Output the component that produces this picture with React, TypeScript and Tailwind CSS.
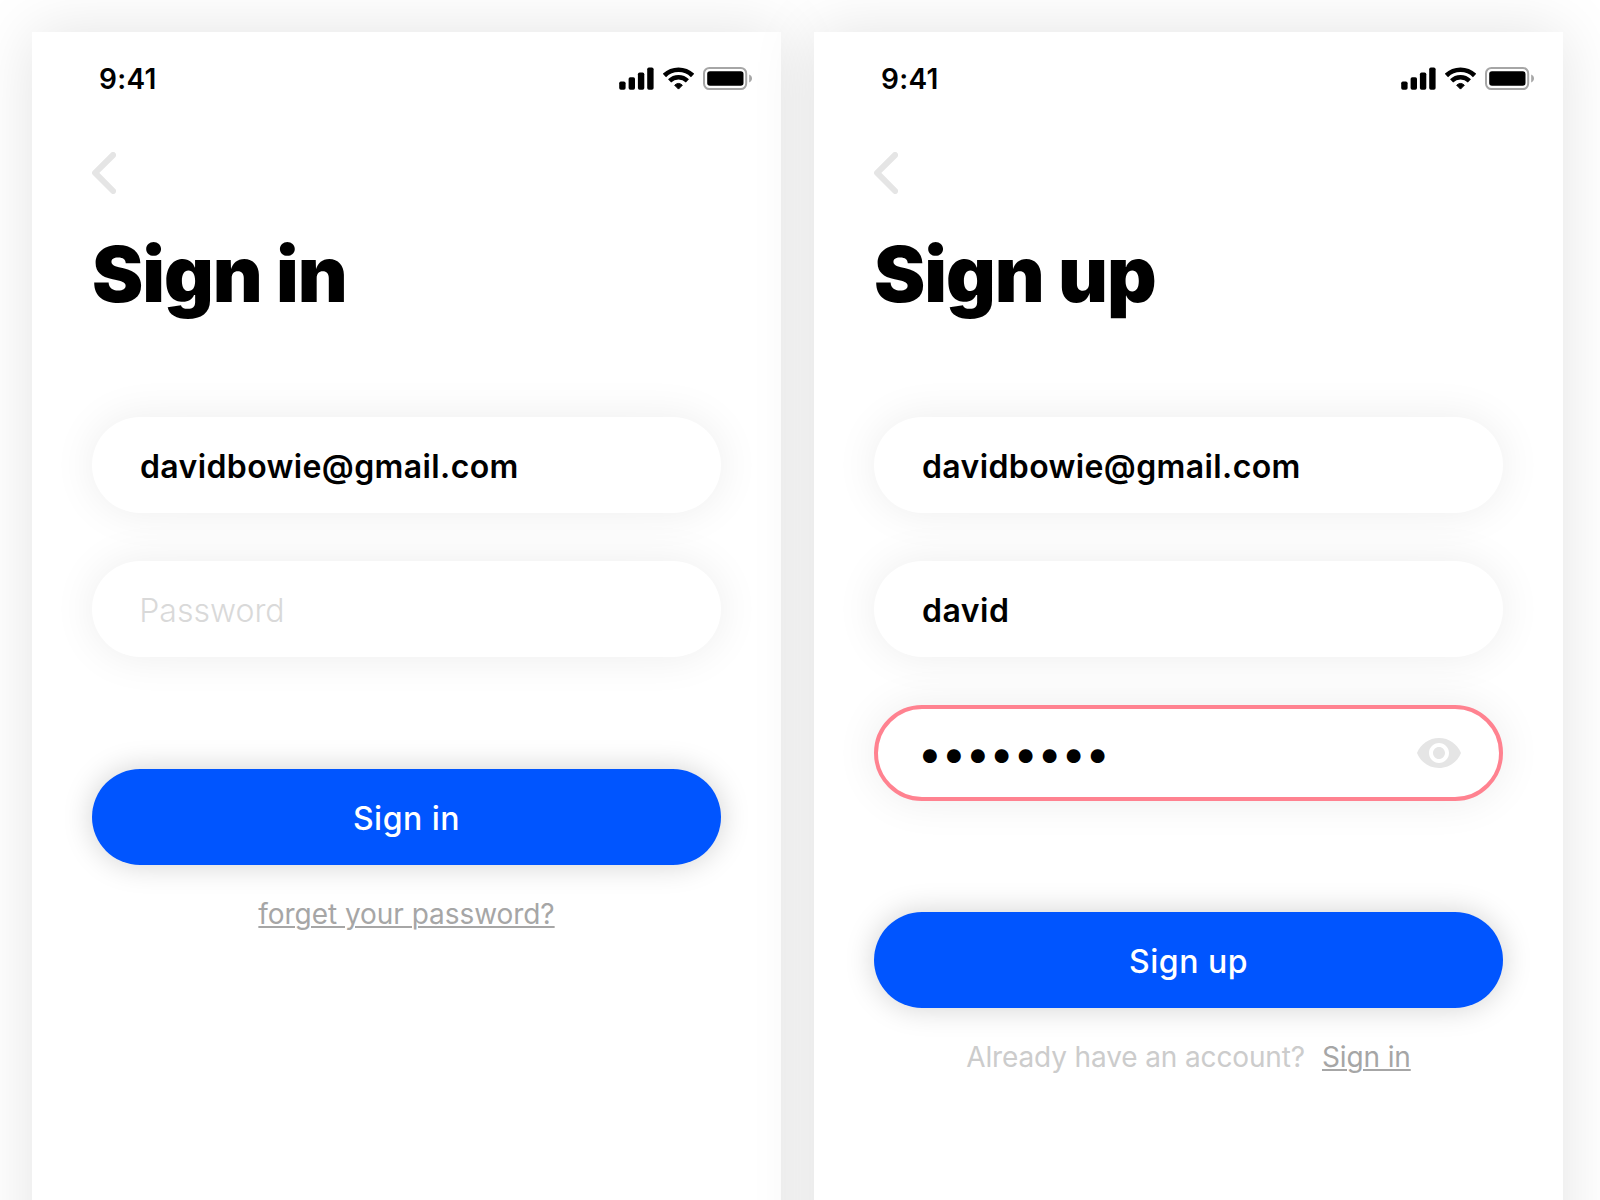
import type { ReactNode } from "react";

function StatusBar() {
  return (
    <div className="flex h-[93px] items-center justify-between pt-px pr-[28px] pl-[67px]">
      <span className="text-[28px] font-[560] tracking-[0.3px]">9:41</span>
      <div className="mb-[2px] flex items-center">
        <svg width="35" height="23" viewBox="0 0 35 23" className="mr-[9px]" aria-hidden="true">
          <rect x="0.2" y="14.5" width="6.4" height="8.3" rx="1.7" />
          <rect x="9.6" y="10.2" width="6.4" height="12.6" rx="1.7" />
          <rect x="18.9" y="5.6" width="6.4" height="17.2" rx="1.7" />
          <rect x="28.2" y="0.6" width="6.4" height="22.2" rx="1.7" />
        </svg>
        <svg width="31" height="23" viewBox="0 0 31 23" className="mr-[9px]" fill="none" stroke="#000" aria-hidden="true">
          <path d="M1.4 8.5 A20.2 20.2 0 0 1 29.6 8.5" strokeWidth="4.7" />
          <path d="M6.6 13.9 A12.6 12.6 0 0 1 24.4 13.9" strokeWidth="4.4" />
          <path d="M11.7 18.2 Q15.5 14.7 19.3 18.2 L15.5 22.1 Z" fill="#000" strokeWidth="1" strokeLinejoin="round" />
        </svg>
        <svg width="50" height="23" viewBox="0 0 50 23" aria-hidden="true">
          <rect x="1" y="1" width="42.2" height="21" rx="5.4" fill="none" stroke="#a6a6a6" strokeWidth="2" />
          <rect x="4.2" y="4.2" width="36.3" height="14.6" rx="2.8" />
          <path d="M46.2 7.6 C48 8.3 49 9.7 49 11.5 C49 13.3 48 14.7 46.2 15.4 Z" fill="#a6a6a6" />
        </svg>
      </div>
    </div>
  );
}

function BackButton() {
  return (
    <button className="mt-[27px] ml-[60px] block h-[42px] w-6" aria-label="Back">
      <svg width="24" height="42" viewBox="0 0 24 42" fill="none" stroke="#e5e5e5" strokeWidth="6" strokeLinecap="round" strokeLinejoin="round">
        <path d="M21.1 3 L3.1 20.9 L21.1 39" />
      </svg>
    </button>
  );
}

function Screen({ title, children }: { title: string; children: ReactNode }) {
  return (
    <section className="h-[1624px] w-[749px] shrink-0 bg-white shadow-[0_0_60px_rgba(0,0,0,0.115)]">
      <StatusBar />
      <BackButton />
      <div className="px-[60px]">
        <h1 className="mt-[32px] text-[77px] leading-[96px] font-[860] tracking-[-1.05px]">{title}</h1>
        <div className="mt-[95px]">{children}</div>
      </div>
    </section>
  );
}

function Field({ children, error = false }: { children: ReactNode; error?: boolean }) {
  return (
    <div
      className={
        "flex h-[96px] items-center justify-between rounded-full bg-white text-[32px] shadow-[0_0_44px_rgba(0,0,0,0.075)] " +
        (error ? "border-4 border-[#ff8290] pr-[36px] pl-[44px]" : "px-[48px] pt-[3px]")
      }
    >
      {children}
    </div>
  );
}

function PrimaryButton({ children }: { children: ReactNode }) {
  return (
    <button className="block h-[96px] w-full rounded-full bg-[#0055ff] pt-[4px] text-center text-[32px] font-medium tracking-[0.5px] text-white shadow-[0_0_30px_rgba(0,0,0,0.18)]">
      {children}
    </button>
  );
}

function EyeIcon() {
  return (
    <svg width="48" height="48" viewBox="0 0 24 24" fill="#e5e5e5" aria-hidden="true">
      <path d="M12 4.5C7 4.5 2.73 7.61 1 12c1.73 4.39 6 7.5 11 7.5s9.27-3.11 11-7.5c-1.73-4.39-6-7.5-11-7.5zM12 17c-2.76 0-5-2.24-5-5s2.24-5 5-5 5 2.24 5 5-2.24 5-5 5zm0-8c-1.66 0-3 1.34-3 3s1.34 3 3 3 3-1.34 3-3-1.34-3-3-3z" />
    </svg>
  );
}

export default function App() {
  return (
    <main className="flex h-[1200px] w-[1600px] gap-[33px] overflow-hidden bg-white pt-8 pl-8 font-['Inter',sans-serif] text-black">
      <Screen title="Sign in">
        <div className="flex flex-col gap-[48px]">
          <Field>
            <span className="font-[640] tracking-[0.38px]">davidbowie@gmail.com</span>
          </Field>
          <Field>
            <span className="-ml-[0.8px] font-[340] text-[#d9d9d9]">Password</span>
          </Field>
        </div>
        <div className="mt-[112px]">
          <PrimaryButton>Sign in</PrimaryButton>
        </div>
        <p className="mt-[29px] text-center text-[28px] leading-[40px] tracking-[-0.05px] text-[#a6a6a6]">
          <a className="underline decoration-2 underline-offset-[2px]">forget your password?</a>
        </p>
      </Screen>
      <Screen title="Sign up">
        <div className="flex flex-col gap-[48px]">
          <Field>
            <span className="font-[640] tracking-[0.38px]">davidbowie@gmail.com</span>
          </Field>
          <Field>
            <span className="font-[640] tracking-[0.5px]">david</span>
          </Field>
          <Field error>
            <span className="-ml-[4.5px] text-[44px] leading-[60px] tracking-[-0.8px]">••••••••</span>
            <EyeIcon />
          </Field>
        </div>
        <div className="mt-[111px]">
          <PrimaryButton>Sign up</PrimaryButton>
        </div>
        <p className="mt-[29px] flex justify-center gap-[17px] text-[28px] leading-[40px] tracking-[-0.13px]">
          <span className="text-[#cccccc]">Already have an account?</span>
          <a className="text-[#a6a6a6] underline decoration-2 underline-offset-[2px]">Sign in</a>
        </p>
      </Screen>
    </main>
  );
}
